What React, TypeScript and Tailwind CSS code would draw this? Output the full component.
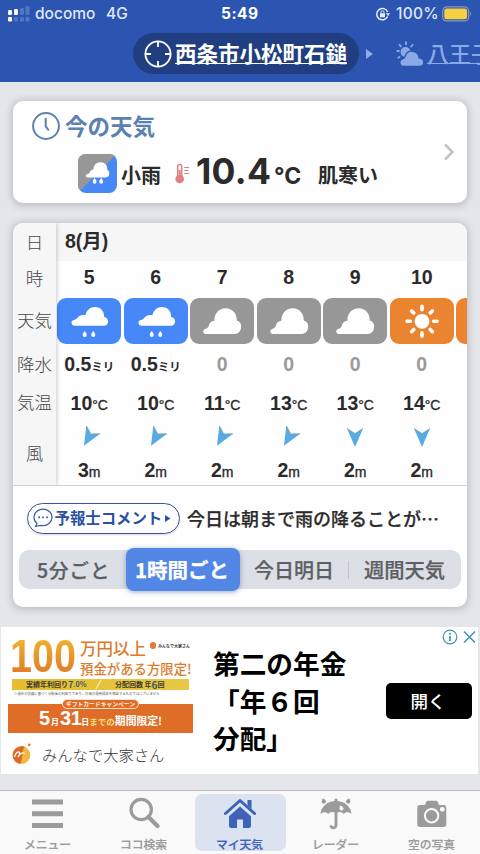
import type { ReactNode } from "react";

type Kind = "rain" | "cloud" | "sun";

type Hour = {
  hour: number;
  kind: Kind;
  rain: string;
  temp: number;
  wind: number;
  slanted: boolean;
};

const hours: Hour[] = [
  { hour: 5, kind: "rain", rain: "0.5", temp: 10, wind: 3, slanted: true },
  { hour: 6, kind: "rain", rain: "0.5", temp: 10, wind: 2, slanted: true },
  { hour: 7, kind: "cloud", rain: "0", temp: 11, wind: 2, slanted: true },
  { hour: 8, kind: "cloud", rain: "0", temp: 13, wind: 2, slanted: true },
  { hour: 9, kind: "cloud", rain: "0", temp: 13, wind: 2, slanted: false },
  { hour: 10, kind: "sun", rain: "0", temp: 14, wind: 2, slanted: false },
];

const tileColors: Record<Kind, string> = {
  rain: "bg-[#4688f8]",
  cloud: "bg-[#979797]",
  sun: "bg-[#ea8430]",
};

function WeatherGlyph({ kind }: { kind: Kind }) {
  if (kind === "sun") {
    return (
      <svg width="64" height="46" viewBox="0 0 64 46" fill="#fff" stroke="#fff">
        <circle cx="32" cy="23.3" r="7.4" stroke="none" />
        <g strokeWidth="3.6" strokeLinecap="round">
          <path d="M32 8.3v3.4M32 34.9v3.4M17 23.3h3.4M43.6 23.3H47M21.6 12.9l2.2 2.2M40.2 31.5l2.2 2.2M42.4 12.9l-2.2 2.2M23.8 31.5l-2.2 2.2" />
        </g>
      </svg>
    );
  }
  if (kind === "cloud") {
    return (
      <svg width="64" height="46" viewBox="0 0 64 46" fill="#fff">
        <path d="M15.5 36a2.6 2.6 0 0 1-.4-5.1c2-.6 3.200-1.500 3.700-3.200.6-2.700 2.600-4.600 5.600-4.900C24 15.500 29.300 10.200 35.700 10.200c6.500 0 11.300 5.200 11.100 12.200 3.100.8 4.400 3.300 4.400 6 0 4.500-3.100 7.600-7.200 7.600z" />
      </svg>
    );
  }
  return (
    <svg width="64" height="46" viewBox="0 0 64 46" fill="#fff">
      <path d="M17.300 27.800a3 3 0 0 1-.6-5.900c1.700-.3 2.600-.8 3.500-2 1.900-2.600 5-3.600 8.200-2.700 1-5 4.800-8.200 9.600-8.200 5.500 0 9.400 4.200 9.100 9.700 2.300.7 4 2.400 4 4.700 0 2.600-1.900 4.400-4.600 4.400z" />
      <path d="M27.700 33c1.400 1.700 2 2.700 2 3.900a2 2 0 0 1-4 0c0-1.200.6-2.200 2-3.900zM36.300 33c1.400 1.700 2 2.700 2 3.900a2 2 0 0 1-4 0c0-1.200.6-2.200 2-3.900z" />
    </svg>
  );
}

function WindArrow({ slanted }: { slanted: boolean }) {
  return (
    <svg width="22" height="22" viewBox="0 0 22 22">
      <g transform={slanted ? "rotate(30 11 11)" : undefined}>
        <path d="M3 2.600 11 7.600 19 2.600 11 21z" fill="#57abe4" />
        <path d="M3 2.600 11 7.600 19 2.600" fill="none" stroke="#7f9bb0" strokeWidth="1" opacity=".8" />
      </g>
    </svg>
  );
}

function StatusBar() {
  return (
    <div className="flex h-[27px] items-center px-2 font-[Inter,sans-serif] text-[15.500px] leading-none font-medium text-[#dfe8fb]">
      <svg width="22" height="16" viewBox="0 0 22 16" className="shrink-0">
        <g fill="#fff">
          <rect x="0" y="4" width="4" height="5" rx="1.200" />
          <rect x="6" y="3" width="4" height="6" rx="1.200" />
          <rect x="0" y="11" width="4" height="4.500" rx="1.200" />
        </g>
        <g fill="#5376c3">
          <rect x="12" y="2" width="4" height="7" rx="1.200" />
          <rect x="17.500" y="0" width="4" height="9" rx="1.200" />
          <rect x="6" y="11" width="4" height="4.500" rx="1.200" />
          <rect x="12" y="11" width="4" height="4.500" rx="1.200" />
          <rect x="17.500" y="11" width="4" height="4.500" rx="1.200" />
        </g>
      </svg>
      <span className="ml-[5px] w-[71px]">docomo</span>
      <span className="w-[115px]">4G</span>
      <span className="w-[154px] text-[15.500px] font-bold tracking-[0.5px] text-white">5:49</span>
      <svg width="16" height="14" viewBox="0 0 16 14" fill="none" stroke="#e6edfc" strokeWidth="1.500" className="shrink-0">
        <path d="M12.600 9.500A5.700 5.700 0 1 1 12.700 5" />
        <path d="M10.800 6.200h4.200L13 9z" fill="#e6edfc" stroke="none" />
        <rect x="5" y="6.300" width="5" height="4" fill="#e6edfc" stroke="none" />
        <path d="M6 6.500V5.200a1.500 1.500 0 0 1 3 0v1.300" strokeWidth="1" />
      </svg>
      <span className="ml-[5px] w-[46px] text-[15.500px] tracking-[0.3px]">100%</span>
      <svg width="30" height="16" viewBox="0 0 30 16" className="shrink-0">
        <rect x=".7" y=".9" width="26" height="14" rx="4" fill="none" stroke="#8b9cb4" strokeWidth="1.200" />
        <rect x="2.300" y="2.500" width="22.800" height="10.800" rx="2.300" fill="#f5d043" />
        <path d="M28.200 5.500c1.200.8 1.200 4 0 4.800z" fill="#8b9cb4" />
      </svg>
    </div>
  );
}

function LocationBar() {
  return (
    <div className="flex h-[55px] items-start overflow-hidden pt-[6px] pl-[133px]">
      <div className="flex h-[41px] w-[226px] shrink-0 items-center rounded-full bg-[#213f80] pl-[11px]">
        <svg width="28" height="28" viewBox="0 0 28 28" fill="none" stroke="#fff" strokeWidth="1.800" className="shrink-0">
          <circle cx="14" cy="14" r="12.600" />
          <path d="M14 1.500V7M14 21v5.500M1.500 14H7M21 14h5.500" />
        </svg>
        <span className="mb-[2px] ml-[3px] border-b-[1.500px] border-white text-[21.500px] leading-[21px] font-bold whitespace-nowrap text-white">
          西条市小松町石鎚
        </span>
      </div>
      <div className="flex h-[41px] shrink-0 items-center">
        <svg width="8" height="10" viewBox="0 0 8 10" className="ml-[7px]">
          <path d="M0 0l7 5-7 5z" fill="#8fabe3" />
        </svg>
        <svg width="30" height="28" viewBox="0 0 30 28" className="ml-[22px]" fill="#8ba9e4">
          <circle cx="9.500" cy="12" r="5" />
          <g stroke="#8ba9e4" strokeWidth="1.900" strokeLinecap="round">
            <path d="M10 2.200v2M3.500 4.800l1.400 1.500M1.300 11h1.600M16.500 5l-1.200 1.500M2.300 17.800l1.200-.9" />
          </g>
          <path
            d="M7.500 26.500a4 4 0 0 1-.5-7.900c1-.2 1.800-.9 2.100-2 .9-3.500 3.800-5.800 7.400-5.400 3.600.3 6.500 3.200 6.800 6.800 2.800.2 4.500 2 4.500 4.200 0 2.600-2 4.300-4.600 4.300z"
            stroke="#2c54b1"
            strokeWidth="1.400"
          />
        </svg>
        <span className="mb-[2px] ml-[1px] border-b-[1.500px] border-[#8ba9e4] text-[22px] leading-[21px] font-medium whitespace-nowrap text-[#8ba9e4]">
          八王子
        </span>
      </div>
    </div>
  );
}

function CurrentWeather() {
  return (
    <section className="mx-[13px] mt-[19px] flex h-[102px] rounded-[10px] bg-[#fefefe] shadow-[0_1px_7px_2px_rgba(70,75,90,0.24)]">
      <div className="w-[431px]">
        <div className="flex h-[50px] items-center pl-[19px]">
          <svg width="28" height="28" viewBox="0 0 28 28" fill="none" stroke="#5f81ad" strokeWidth="2">
            <circle cx="14" cy="14" r="12.900" />
            <path d="M13.700 6v8.300l3.100 4.200" />
          </svg>
          <h1 className="mb-[2px] ml-[5px] text-[22.500px] leading-none font-bold text-[#5b80b2]">今の天気</h1>
        </div>
        <div className="flex h-[45px] items-center pl-[65px]">
          <svg width="39" height="39" viewBox="0 0 39 39" className="shrink-0">
            <rect width="39" height="39" rx="8" fill="#4688f8" />
            <path d="M0 31V8a8 8 0 0 1 8-8h24a8 8 0 0 1 4.700 1.800L2.400 36.600A8 8 0 0 1 0 31z" fill="#979797" />
            <path d="M9.500 23.500a1.700 1.700 0 0 1 0-3.400c1.600-.5 2-1.100 2.500-2.300a3 3 0 0 1 3.200-2c.5-4.500 3-7.600 7.200-7.600 4.400 0 7.300 3.200 7 7.800 1.300.6 1.900 1.800 1.900 3.400 0 2.500-1.600 4.100-4 4.100z" fill="#fff" />
            <path d="M16.600 24c1.300 1.700 1.900 2.700 1.900 3.800a1.900 1.900 0 0 1-3.800 0c0-1.100.6-2.100 1.900-3.800zM23.200 24c1.300 1.700 1.900 2.700 1.900 3.800a1.900 1.900 0 0 1-3.800 0c0-1.100.6-2.100 1.900-3.800z" fill="#fff" />
          </svg>
          <span className="ml-[4px] w-[54px] shrink-0 pt-[3px] text-[20px] leading-none font-bold">小雨</span>
          <svg width="16" height="22" viewBox="0 0 16 22" fill="none" stroke="#df8082" className="shrink-0">
            <path d="M2.700 13V3.500a2 2 0 0 1 4 0V13" strokeWidth="1.500" />
            <circle cx="4.700" cy="16" r="4.300" fill="#df8082" stroke="none" />
            <path d="M4.700 7v8" strokeWidth="2" />
            <path d="M9.200 4.500h5M9.200 7.500h4M9.200 10.500h5" strokeWidth="1.200" />
          </svg>
          <div className="mb-[4px] ml-[5px] flex w-[122px] shrink-0 items-baseline font-[Inter,sans-serif] leading-none font-bold">
            <span className="w-[78px] text-[35.500px] tracking-[0.3px]">10.4</span>
            <span className="text-[23px] tracking-[0px]">°C</span>
          </div>
          <span className="pt-[3px] text-[20px] leading-none font-bold">肌寒い</span>
        </div>
      </div>
      <div className="flex items-center">
        <svg width="12" height="18" viewBox="0 0 12 18" fill="none" stroke="#c2c2c2" strokeWidth="2.600">
          <path d="M1 1.500 8.500 9 1 16.500" />
        </svg>
      </div>
    </section>
  );
}

function Unit({ children }: { children: ReactNode }) {
  return <span className="text-[14px] font-normal [-webkit-text-stroke:0.35px_#2b2b2b]">{children}</span>;
}

function HourColumn({ data }: { data: Hour }) {
  const dry = data.rain === "0";
  return (
    <div className="flex w-[66.500px] shrink-0 flex-col items-center text-[19.500px] leading-none font-bold">
      <div className="flex h-[37px] items-center pb-[3px]">{data.hour}</div>
      <div className={`flex h-[46px] w-[64px] justify-center rounded-[9px] ${tileColors[data.kind]}`}>
        <WeatherGlyph kind={data.kind} />
      </div>
      <div className="flex h-[41px] items-center">
        {dry ? (
          <span className="text-[#9b9b9b]">0</span>
        ) : (
          <span className="whitespace-nowrap">
            {data.rain}
            <span className="text-[11.500px]">ミリ</span>
          </span>
        )}
      </div>
      <div className="flex h-[38px] items-center">
        <span className="whitespace-nowrap">
          {data.temp}
          <Unit>°C</Unit>
        </span>
      </div>
      <div className="flex h-[27px] items-center">
        <WindArrow slanted={data.slanted} />
      </div>
      <div className="flex h-[36px] items-center pt-[5px]">
        <span>
          {data.wind}
          <Unit>m</Unit>
        </span>
      </div>
    </div>
  );
}

function HourlyTable() {
  return (
    <div className="flex h-[263px] overflow-hidden rounded-t-[10px] border-b border-[#d0d0d3]">
      <div className="relative z-10 flex w-[43px] shrink-0 flex-col bg-[#f6f6f7] text-center text-[17.500px] leading-none font-light text-[#484848] shadow-[1px_0_4px_rgba(0,0,0,0.2)]">
        <div className="flex h-[38px] items-center justify-center">日</div>
        <div className="flex h-[35px] items-center justify-center">時</div>
        <div className="flex h-[49px] items-center justify-center">天気</div>
        <div className="flex h-[40px] items-center justify-center">降水</div>
        <div className="flex h-[36px] items-center justify-center">気温</div>
        <div className="flex h-[66px] items-center justify-center">風</div>
      </div>
      <div className="min-w-0 flex-1 overflow-hidden font-['Liberation_Sans','Noto_Sans_CJK_JP',sans-serif]">
        <div className="flex h-[38px] items-center bg-[#f6f6f6] pl-[9px] text-[19.500px] leading-none font-bold">8(月)</div>
        <div className="flex">
          {hours.map((h) => (
            <HourColumn key={h.hour} data={h} />
          ))}
          <div className="mt-[37px] ml-[1px] h-[46px] w-[64px] shrink-0 rounded-[9px] bg-[#ea8430]" />
        </div>
      </div>
    </div>
  );
}

function Forecast() {
  return (
    <section className="mx-[13px] mt-[20px] h-[384px] rounded-[10px] bg-[#fefefe] shadow-[0_1px_7px_2px_rgba(70,75,90,0.24)]">
      <HourlyTable />
      <div className="flex h-[64px] items-center pl-[14px]">
        <div className="flex h-[31px] w-[153px] items-center rounded-full border-[1.500px] border-[#385398] pl-[5px] text-[#2c4f9f] shadow-[0_1px_2px_rgba(0,0,0,0.15)]">
          <svg width="20" height="20" viewBox="0 0 20 20" fill="none" stroke="#3a5aa2" strokeWidth="1.200" className="shrink-0">
            <path d="M4 15.500A9 8.200 0 1 1 8 17.400L2 18.500c1.500-1 2-1.800 2-3z" />
            <path d="M5.300 9.300h1.700M9.200 9.300h1.700M13.100 9.300h1.700" strokeWidth="1.700" />
          </svg>
          <span className="ml-[1.500px] text-[15.400px] leading-none font-bold whitespace-nowrap">予報士コメント</span>
          <svg width="6" height="7" viewBox="0 0 6 7" className="ml-[3px] shrink-0">
            <path d="M0 0l5.500 3.500L0 7z" fill="#2c4f9f" />
          </svg>
        </div>
        <p className="ml-[7px] text-[18px] leading-none font-medium whitespace-nowrap [-webkit-text-stroke:0.25px_#2b2b2b]">
          今日は朝まで雨の降ることが…
        </p>
      </div>
      <div className="mx-[6px] flex h-[39px] items-center rounded-[10px] bg-[#dcdfe5] text-[20px] leading-none font-medium text-[#5d5f64] [-webkit-text-stroke:0.25px_currentColor]">
        <span className="w-[107px] pl-[18px] text-[19.500px] tracking-[1px] whitespace-nowrap">5分ごと</span>
        <span className="flex h-[43px] w-[114px] shrink-0 items-center justify-center rounded-[8px] bg-[#5287e5] pr-[2px] text-[20.500px] font-bold whitespace-nowrap text-white shadow-[0_1px_5px_rgba(60,90,150,0.5)]">
          1時間ごと
        </span>
        <span className="w-[108px] pl-[14px] whitespace-nowrap">今日明日</span>
        <span className="h-[18px] w-px bg-[#bfc3ca]" />
        <span className="pl-[15px] text-[20.300px] whitespace-nowrap">週間天気</span>
      </div>
    </section>
  );
}

function AdBanner() {
  return (
    <div className="flex w-[185px] flex-col">
      <div className="flex h-[42px] items-start pl-[2px]">
        <div className="w-[70px] shrink-0">
          <span className="inline-block origin-left scale-x-[0.86] bg-linear-to-b from-[#efb62f] to-[#e07828] bg-clip-text font-['Liberation_Sans',sans-serif] text-[46px] leading-[40px] font-bold text-transparent">
            100
          </span>
        </div>
        <div className="pt-[3px] text-[#dc7b2c]">
          <div className="flex h-[20px] items-start">
            <span className="text-[16.500px] leading-[18px] font-medium whitespace-nowrap">万円以上</span>
            <span className="mt-[3px] ml-[4px] h-[7px] w-[6px] rounded-full bg-[#df7c35]" />
            <span className="mt-[4px] ml-[2px] text-[4px] leading-[6px] font-bold whitespace-nowrap text-[#333]">みんなで大家さん</span>
          </div>
          <div className="text-[13.400px] leading-[19px] font-medium whitespace-nowrap">預金がある方限定!</div>
        </div>
      </div>
      <div className="mt-[1px] ml-[4px] flex h-[11px] w-[177px] shrink-0 items-center bg-linear-to-r from-[#e5bd2e] to-[#e8c844] text-[7px] leading-none font-bold whitespace-nowrap text-[#3b3a35]">
        <span className="flex w-[86px] items-center pl-[14px]">
          実績年利回り<span className="text-[9px] text-[#35566e]">7</span>
          <span className="text-[7px] text-[#35566e]">.0%</span>
        </span>
        <span className="h-[11px] w-px rotate-30 bg-[#fff3c0]" />
        <span className="flex items-center pl-[16px]">
          分配回数 年<span className="text-[10px] text-[#35566e]">6</span>回
        </span>
      </div>
      <div className="h-[10px] pt-[2px] pl-[6px] text-[3.400px] leading-[4px] whitespace-nowrap text-[#555]">
        ※過去の実績に基づく分配金の利回りであり、将来の運用成果を保証するものではございません
      </div>
      <div className="relative mt-[4px] flex h-[29px] shrink-0 items-end justify-center bg-[#df6d28] pb-[2px] font-bold text-white">
        <span className="absolute top-[-5px] left-[54px] flex h-[10px] w-[77px] items-center justify-center rounded-full border border-[#fbe1c9] bg-[#df6d28] text-[5.800px] leading-none whitespace-nowrap text-[#fff0e0]">
          ギフトカードキャンペーン
        </span>
        <span className="flex items-baseline leading-[18px] whitespace-nowrap">
          <b className="font-['Liberation_Sans',sans-serif] text-[20px]">5</b>
          <span className="ml-px text-[8px]">月</span>
          <b className="ml-px font-['Liberation_Sans',sans-serif] text-[20px] tracking-[-0.500px]">31</b>
          <span className="text-[8px]">日</span>
          <span className="text-[8.500px] text-[#f8df75]">までの</span>
          <span className="text-[10.800px]">期間限定!</span>
        </span>
      </div>
      <div className="flex h-[42px] items-center pt-[2px] pl-[4px]">
        <svg width="20" height="22" viewBox="0 0 20 22">
          <ellipse cx="9.500" cy="12" rx="8.800" ry="9" fill="#f0b93d" />
          <path d="M12.500 3.600C6.500 2 .700 6.200.700 12c0 4.600 3 8 7.300 8.800C11.500 17 9 10 12.500 3.600z" fill="#db6b2b" />
          <path d="M2.500 14c.8-4 4-6.500 5-4.500.7 1.700-1.500 4.500-1.500 4.500 1-3 5.500-6 6.500-3" fill="none" stroke="#fff" strokeWidth="1.200" />
          <circle cx="17.300" cy="1.800" r="1.300" fill="#db6b2b" />
        </svg>
        <span className="ml-[10px] text-[15.300px] leading-none font-light whitespace-nowrap text-[#333]">みんなで大家さん</span>
      </div>
    </div>
  );
}

function Ad() {
  return (
    <section className="relative mt-[20px] mr-[2px] ml-px flex h-[147px] bg-white pt-[9px] pl-[7px]">
      <AdBanner />
      <div className="ml-[20px] w-[173px] pt-[8px] text-[26.700px] leading-[37.500px] font-bold text-black">
        <p>第二の年金</p>
        <p>「年６回</p>
        <p>分配」</p>
      </div>
      <button className="mt-[47px] flex h-[36px] w-[86px] items-center justify-center rounded-[5px] bg-black pr-[2px] text-[17.500px] leading-none font-medium text-white">
        開く
      </button>
      <svg width="35" height="16" viewBox="0 0 35 16" fill="none" stroke="#4493b7" className="absolute top-[2px] right-[1px]">
        <circle cx="8" cy="8" r="6.800" strokeWidth="1.200" />
        <path d="M8 4v1.700M8 7v5" strokeWidth="1.700" />
        <path d="M22 2.500l11 11M33 2.500l-11 11" strokeWidth="1.600" />
      </svg>
    </section>
  );
}

const tabs: { label: string; icon: ReactNode; active?: boolean }[] = [
  {
    label: "メニュー",
    icon: <path d="M0 4.500h31v5H0zM0 16.300h31v5H0zM0 28h31v5H0z" />,
  },
  {
    label: "ココ検索",
    icon: (
      <g fill="none" stroke="#9b9b9b">
        <circle cx="13.200" cy="14.500" r="10.200" strokeWidth="3.200" />
        <path d="M20.500 22l9 9" strokeWidth="4.200" strokeLinecap="round" />
      </g>
    ),
  },
  {
    label: "マイ天気",
    active: true,
    icon: (
      <>
        <path d="M1.500 18.500 16 5.500l14.500 13" fill="none" stroke="#3e63b8" strokeWidth="3" strokeLinecap="round" strokeLinejoin="round" />
        <path d="M23.500 5h4v9l-4-3.500z" />
        <path d="M16 11.500 27 21.300v9.200a2.500 2.500 0 0 1-2.500 2.500H19v-8.500h-6V33H7.500A2.500 2.500 0 0 1 5 30.500v-9.200z" />
      </>
    ),
  },
  {
    label: "レーダー",
    icon: (
      <>
        <path d="M.5 19C1 11.500 7.500 6.500 14.500 6V3.800h3V6c7 .5 13.500 5.500 14 13-2.500-2.500-6-2.500-7.800 0-1.900-2.300-4.200-2.700-7.700-.5-3.500-2.200-5.800-1.800-7.700.5C6.500 16.500 3 16.500.5 19z" />
        <path d="M16 17v13.500a2.700 2.700 0 0 1-5 1" fill="none" stroke="#9b9b9b" strokeWidth="2.800" strokeLinecap="round" />
        <path d="M2.500 3.500c3 1 4 2.500 3.300 4-.8 1.600-3.300 1.500-3.900 0-.5-1.200.2-2.500.6-4zM29.500 3.500c-3 1-4 2.500-3.300 4 .8 1.600 3.300 1.500 3.900 0 .5-1.200-.2-2.500-.6-4z" />
        <path d="M20 10.500c2.800.5 4 2.500 3.300 4-.8 1.500-3 1.300-3.600-.2-.4-1.200.1-2.400.3-3.800z" fill="#f9f9f9" />
      </>
    ),
  },
  {
    label: "空の写真",
    icon: (
      <>
        <path d="M4.500 10H9l1.300-3.200A1.800 1.800 0 0 1 12 5.700h8a1.800 1.800 0 0 1 1.700 1.100L23 10h4.500A2.800 2.800 0 0 1 30.300 12.800V29a3 3 0 0 1-3 3h-23a3 3 0 0 1-3-3V13a3 3 0 0 1 3.200-3z" />
        <circle cx="15.600" cy="20.800" r="6.700" fill="none" stroke="#f9f9f9" strokeWidth="2" />
        <circle cx="26.300" cy="14.300" r="2.400" fill="#f9f9f9" />
      </>
    ),
  },
];

function BottomNav() {
  return (
    <nav className="mt-[16px] flex h-[64px] border-t border-[#bebec2] bg-[#f9f9f9] pt-[3px]">
      {tabs.map((t) => (
        <div key={t.label} className="flex w-[96px] items-start justify-center">
          <div
            className={`flex h-[57px] w-[91px] flex-col items-center rounded-[7px] pr-px ${
              t.active ? "bg-[#dbe2f0] text-[#3e63b8]" : "text-[#9b9b9b]"
            }`}
          >
            <svg width="32" height="38" viewBox="0 -1 32 38" fill="currentColor">
              {t.icon}
            </svg>
            <span className="mt-[6px] text-[11.800px] leading-none font-medium whitespace-nowrap [-webkit-text-stroke:0.2px_currentColor]">
              {t.label}
            </span>
          </div>
        </div>
      ))}
    </nav>
  );
}

export default function App() {
  return (
    <main className="flex h-[854px] w-[480px] flex-col overflow-hidden bg-[#e5e6ea] font-[Noto_Sans_CJK_JP,sans-serif] text-[#2b2b2b]">
      <header className="h-[82px] shrink-0 bg-[#2c54b1]">
        <StatusBar />
        <LocationBar />
      </header>
      <CurrentWeather />
      <Forecast />
      <Ad />
      <BottomNav />
    </main>
  );
}
